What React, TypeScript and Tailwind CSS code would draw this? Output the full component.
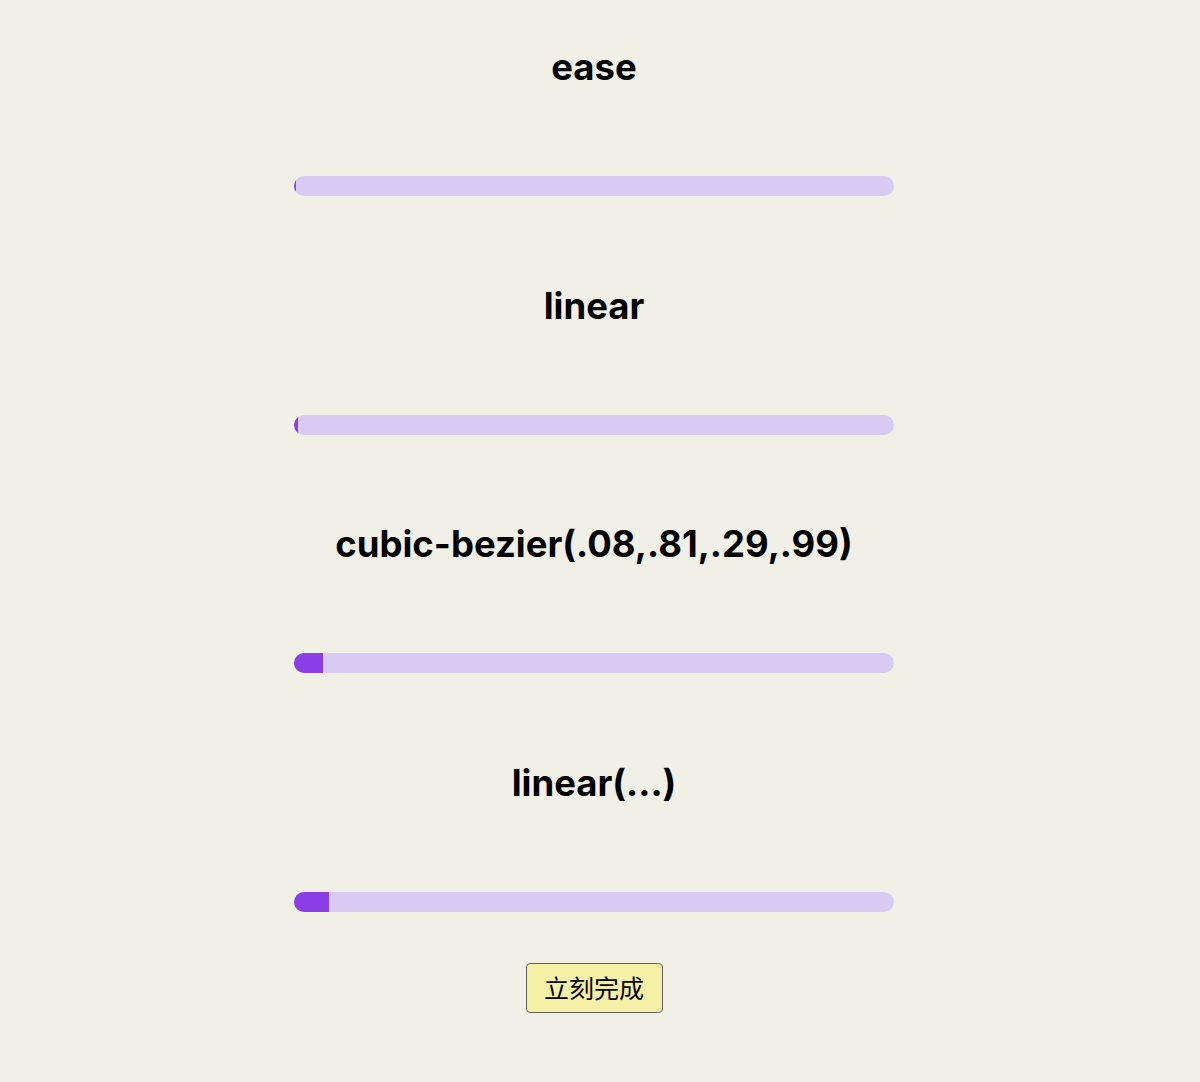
import React from "react";

const rows = [
  { label: "ease", fill: 2 },
  { label: "linear", fill: 4 },
  { label: "cubic-bezier(.08,.81,.29,.99)", fill: 29 },
  { label: "linear(...)", fill: 35 },
];

export default function App() {
  return (
    <div
      className="min-h-[1082px] w-full bg-[#f0f0e6] flex flex-col items-center pt-[47px] pr-[12px]"
      style={{ fontFamily: "Inter, 'Liberation Sans', sans-serif" }}
    >
      <div className="flex flex-col gap-[89.67px]">
        {rows.map((r) => (
          <div key={r.label} className="w-[600px] flex flex-col items-center">
            <h1 className="text-[36.5px] leading-[40px] font-bold text-black">{r.label}</h1>
            <div className="mt-[89px] w-[600px] h-[20px] rounded-full bg-[#d9caf4] overflow-hidden">
              <div className="h-full bg-[#8a3fe6]" style={{ width: r.fill }} />
            </div>
          </div>
        ))}
      </div>
      <button
        className="mt-[51px] w-[137px] h-[50px] rounded-[4px] border-[1.5px] border-[#5e5e5e] bg-[#f4f0a6] text-[25px] text-black flex items-center justify-center"
        style={{ fontFamily: "'Noto Sans CJK SC', sans-serif" }}
      >
        立刻完成
      </button>
    </div>
  );
}
